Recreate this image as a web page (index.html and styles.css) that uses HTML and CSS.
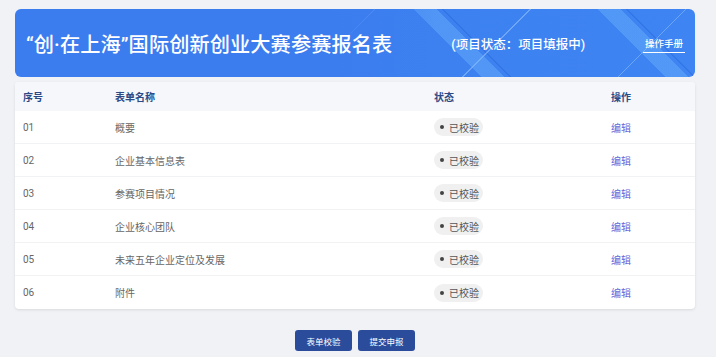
FILE: index.html
```html
<!DOCTYPE html>
<html lang="zh-CN">
<head>
<meta charset="utf-8">
<title>报名表</title>
<link rel="stylesheet" href="styles.css">
</head>
<body>
<div class="page">
  <header class="banner">
    <h1 class="title">“创·在上海”国际创新创业大赛参赛报名表</h1>
    <span class="state">(项目状态：项目填报中)</span>
    <a class="manual" href="#">操作手册</a>
  </header>

  <section class="card">
    <div class="row head">
      <div>序号</div><div>表单名称</div><div>状态</div><div>操作</div>
    </div>
    <div class="row">
      <div>01</div><div>概要</div><div><span class="badge"><i class="dot"></i>已校验</span></div><div><a class="edit" href="#">编辑</a></div>
    </div>
    <div class="row">
      <div>02</div><div>企业基本信息表</div><div><span class="badge"><i class="dot"></i>已校验</span></div><div><a class="edit" href="#">编辑</a></div>
    </div>
    <div class="row">
      <div>03</div><div>参赛项目情况</div><div><span class="badge"><i class="dot"></i>已校验</span></div><div><a class="edit" href="#">编辑</a></div>
    </div>
    <div class="row">
      <div>04</div><div>企业核心团队</div><div><span class="badge"><i class="dot"></i>已校验</span></div><div><a class="edit" href="#">编辑</a></div>
    </div>
    <div class="row">
      <div>05</div><div>未来五年企业定位及发展</div><div><span class="badge"><i class="dot"></i>已校验</span></div><div><a class="edit" href="#">编辑</a></div>
    </div>
    <div class="row last">
      <div>06</div><div>附件</div><div><span class="badge"><i class="dot"></i>已校验</span></div><div><a class="edit" href="#">编辑</a></div>
    </div>
  </section>

  <div class="actions">
    <button class="btn">表单校验</button>
    <button class="btn">提交申报</button>
  </div>
</div>
</body>
</html>
```
FILE: styles.css
```css
html, body {
  margin: 0;
  padding: 0;
  background: #f0f2f6;
}
body {
  font-family: "Roboto", "Noto Sans CJK SC", sans-serif;
  color: #555;
}
.page {
  padding: 9px 21px 0 15px;
}
.banner {
  height: 68px;
  border-radius: 6px;
  display: flex;
  align-items: center;
  padding: 0 10px 0 11px;
  box-sizing: border-box;
  color: #fff;
  background:
    linear-gradient(90deg, #3b7cee 0%, #3b7cee 46%, rgba(59,124,238,0) 62%),
    repeating-linear-gradient(45deg, rgba(255,255,255,0) 0 70px, rgba(120,190,255,.35) 70px 86px, rgba(255,255,255,0) 86px 130px),
    repeating-linear-gradient(-45deg, rgba(255,255,255,0) 0 54px, rgba(200,230,255,.35) 54px 55px, rgba(255,255,255,0) 55px 110px),
    repeating-linear-gradient(45deg, rgba(255,255,255,0) 0 90px, rgba(10,60,180,.18) 90px 91px, rgba(255,255,255,0) 91px 130px),
    linear-gradient(90deg, #3b7cee 0%, #3e84f2 100%);
}
.title {
  margin: 0;
  font-size: 20.2px;
  font-weight: 500;
  letter-spacing: 0.1px;
}
.state {
  margin-left: 59px;
  font-size: 12.5px;
  font-weight: 500;
}
.manual {
  margin-left: auto;
  color: #fff;
  font-size: 9.5px;
  font-weight: 500;
  text-decoration: none;
  border-bottom: 1px solid #fff;
  padding: 0 2px 2px;
  margin-top: 2px;
}
.card {
  margin-top: 5px;
  background: #fff;
  border-radius: 4px;
  box-shadow: 0 1px 3px rgba(0,0,0,.10);
  overflow: hidden;
}
.row {
  display: grid;
  grid-template-columns: 92px 319px 177px 1fr;
  align-items: center;
  height: 33px;
  padding-left: 8px;
  font-size: 10px;
  color: #666;
  border-bottom: 1px solid #f1f2f4;
  box-sizing: border-box;
}
.row.last {
  border-bottom: none;
}
.row.head {
  height: 29px;
  background: #f5f7fb;
  color: #2c4a86;
  font-weight: 700;
  border-bottom: none;
}
.badge {
  display: inline-flex;
  align-items: center;
  height: 18px;
  width: 49px;
  box-sizing: border-box;
  padding-left: 6px;
  border-radius: 9px;
  background: #f0f0f0;
  color: #555;
  font-size: 10px;
}
.dot {
  width: 4px;
  height: 4px;
  border-radius: 50%;
  background: #444;
  margin-right: 5px;
}
.edit {
  color: #6a64d6;
  text-decoration: none;
  font-size: 10px;
}
.actions {
  display: flex;
  justify-content: center;
  gap: 6px;
  margin-top: 21px;
}
.btn {
  width: 57px;
  height: 21px;
  border: none;
  border-radius: 3px;
  background: #2b4b9b;
  color: #fff;
  font-family: "Noto Sans CJK SC", sans-serif;
  font-size: 8.5px;
  padding: 0;
  cursor: pointer;
}
```
